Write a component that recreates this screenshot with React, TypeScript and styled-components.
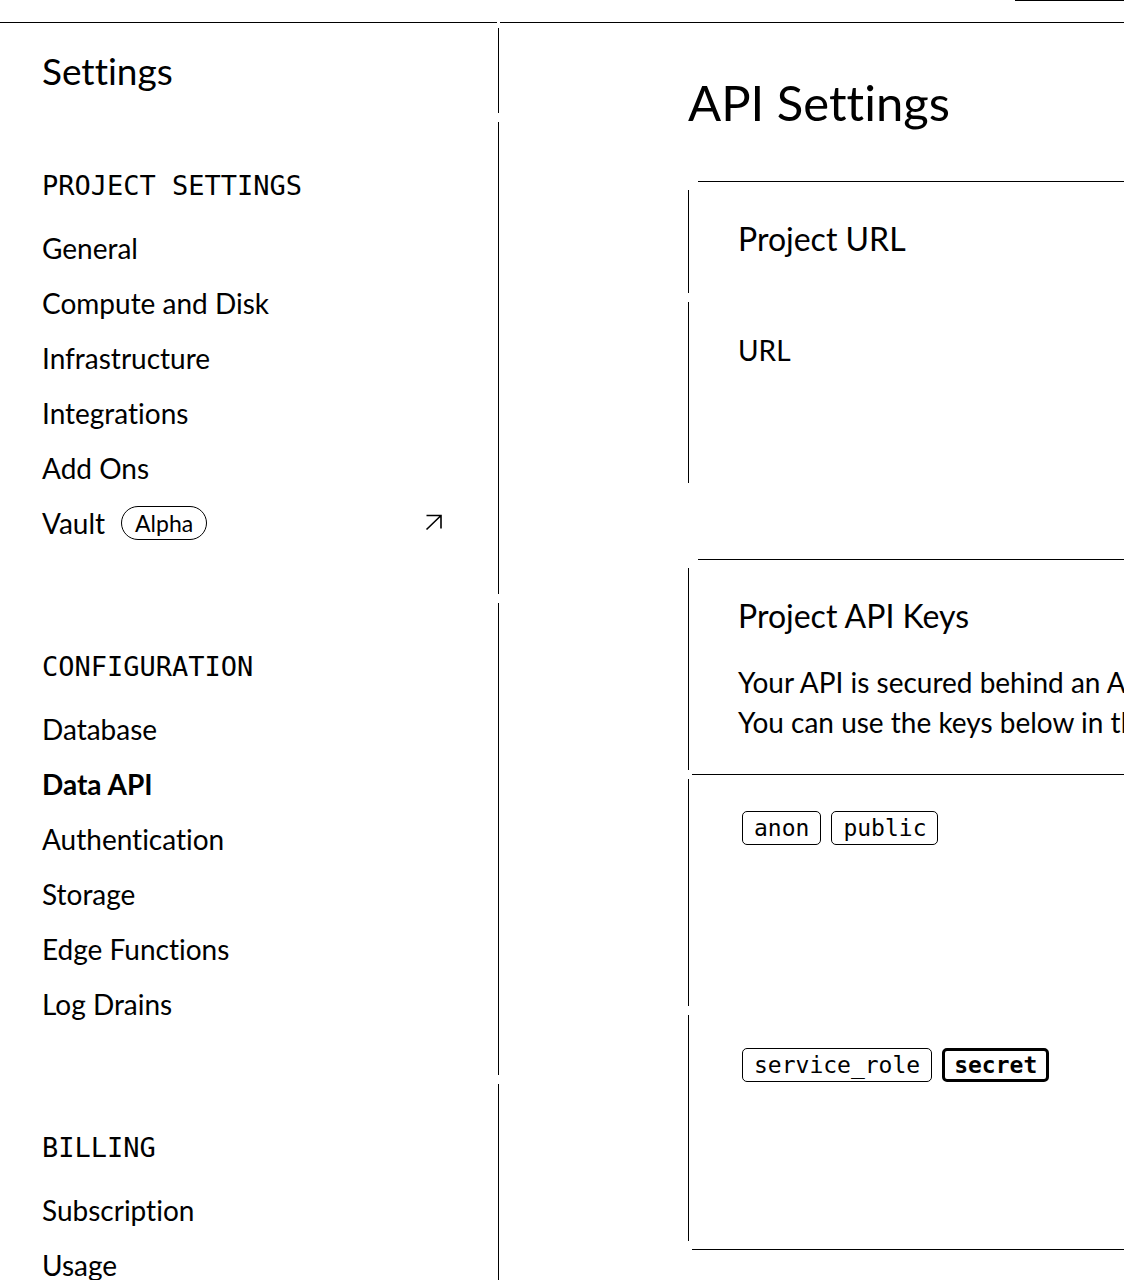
import styled, { createGlobalStyle } from 'styled-components';

const GlobalStyle = createGlobalStyle`
  html, body {
    margin: 0;
    padding: 0;
    background: #fff;
    color: #000;
    font-family: Lato, "Liberation Sans", sans-serif;
    font-variant-ligatures: none;
  }
  * {
    box-sizing: border-box;
  }
`;

const SANS = `Lato, "Liberation Sans", sans-serif`;
const MONO = `"DejaVu Sans Mono", "Liberation Mono", monospace`;

interface NavItem {
  label: string;
  active?: boolean;
  badge?: string;
  external?: boolean;
}

interface NavGroup {
  title: string;
  items: NavItem[];
}

const groups: NavGroup[] = [
  {
    title: 'PROJECT SETTINGS',
    items: [
      { label: 'General' },
      { label: 'Compute and Disk' },
      { label: 'Infrastructure' },
      { label: 'Integrations' },
      { label: 'Add Ons' },
      { label: 'Vault', badge: 'Alpha', external: true },
    ],
  },
  {
    title: 'CONFIGURATION',
    items: [
      { label: 'Database' },
      { label: 'Data API', active: true },
      { label: 'Authentication' },
      { label: 'Storage' },
      { label: 'Edge Functions' },
      { label: 'Log Drains' },
    ],
  },
  {
    title: 'BILLING',
    items: [{ label: 'Subscription' }, { label: 'Usage' }],
  },
];

const ExternalIcon = () => (
  <svg width="17" height="17" viewBox="0 0 17 17" fill="none">
    <path
      d="M1.5 1.5H16V14.5M1.5 15.5L16 1.5"
      stroke="#000"
      strokeWidth="1.6"
    />
  </svg>
);

const App = () => {
  return (
    <Page>
      <GlobalStyle />
      <TopBar>
        <TopBarLeft />
        <TopBarRight>
          <TopAction />
        </TopBarRight>
      </TopBar>

      <Layout>
        <Sidebar>
          <SidebarHead>
            <SidebarHeading>Settings</SidebarHeading>
          </SidebarHead>

          {groups.map((group, i) => (
            <SidebarGroup key={group.title} $grow={i === groups.length - 1}>
              <GroupTitle>{group.title}</GroupTitle>
              {group.items.map((item) => (
                <NavLink key={item.label} $active={item.active}>
                  <span>{item.label}</span>
                  {item.badge && <Badge>{item.badge}</Badge>}
                  {item.external && (
                    <IconSlot>
                      <ExternalIcon />
                    </IconSlot>
                  )}
                </NavLink>
              ))}
            </SidebarGroup>
          ))}
        </Sidebar>

        <Main>
          <PageTitle>API Settings</PageTitle>

          <Card $spaceAfter={72}>
            <CardEdge />
            <Section $height={103} $padTop={30}>
              <SectionTitle>Project URL</SectionTitle>
            </Section>
            <Divider />
            <Section $height={181} $padTop={28}>
              <FieldLabel>URL</FieldLabel>
            </Section>
          </Card>

          <Card>
            <CardEdge />
            <Section $height={202}>
              <SectionTitle>Project API Keys</SectionTitle>
              <Description>
                <p>
                  Your API is secured behind an API gateway which requires an
                  API Key for every request.
                </p>
                <p>
                  You can use the keys below in the Supabase client libraries.
                </p>
              </Description>
            </Section>
            <Divider $visible />
            <Section $height={227} $padTop={32}>
              <PillRow>
                <Pill>anon</Pill>
                <Pill>public</Pill>
              </PillRow>
            </Section>
            <Divider />
            <Section $height={226} $padTop={33}>
              <PillRow>
                <Pill>service_role</Pill>
                <Pill $strong>secret</Pill>
              </PillRow>
            </Section>
            <CardEdge $bottom />
          </Card>
        </Main>
      </Layout>
    </Page>
  );
};

export default App;

const Page = styled.div`
  width: 1124px;
  height: 1280px;
  overflow: hidden;
  display: flex;
  flex-direction: column;
`;

const TopBar = styled.header`
  display: flex;
  gap: 3px;
  height: 23px;
  flex-shrink: 0;
`;

const TopBarLeft = styled.div`
  width: 497px;
  border-bottom: 1px solid #000;
`;

const TopBarRight = styled.div`
  flex: 1;
  display: flex;
  justify-content: flex-end;
  align-items: flex-start;
  border-bottom: 1px solid #000;
`;

const TopAction = styled.div`
  width: 109px;
  border-top: 1px solid #000;
`;

const Layout = styled.div`
  flex: 1;
  display: grid;
  grid-template-columns: 499px 1fr;
  min-height: 0;
`;

const Sidebar = styled.aside`
  display: flex;
  flex-direction: column;
  gap: 9px;
  padding-top: 5px;
`;

const SidebarHead = styled.div`
  height: 85px;
  display: flex;
  align-items: center;
  padding: 0 0 0 42px;
  border-right: 1px solid #000;
`;

const SidebarHeading = styled.h1`
  margin: 0;
  font-family: ${SANS};
  font-size: 37px;
  font-weight: 400;
  line-height: 40px;
`;

const SidebarGroup = styled.nav<{ $grow?: boolean }>`
  display: flex;
  flex-direction: column;
  padding: 44px 56px 44px 42px;
  border-right: 1px solid #000;
  flex: ${(p) => (p.$grow ? 1 : '0 0 auto')};
`;

const GroupTitle = styled.h2`
  margin: 0 0 14px;
  height: 40px;
  line-height: 40px;
  font-family: ${MONO};
  font-size: 27px;
  font-weight: 400;
  letter-spacing: 0;
`;

const NavLink = styled.a<{ $active?: boolean }>`
  display: flex;
  align-items: center;
  height: 55px;
  font-family: ${SANS};
  font-size: 28px;
  font-weight: ${(p) => (p.$active ? 700 : 400)};
  color: #000;
  white-space: nowrap;
`;

const Badge = styled.span`
  margin-left: 16px;
  height: 34px;
  padding: 0 13px;
  display: inline-flex;
  align-items: center;
  border: 1px solid #000;
  border-radius: 17px;
  font-size: 23px;
`;

const IconSlot = styled.span`
  margin-left: auto;
  display: flex;
  align-items: center;
`;

const Main = styled.main`
  padding: 49px 0 0 189px;
  overflow: hidden;
`;

const PageTitle = styled.h1`
  margin: 0 0 49px;
  height: 60px;
  line-height: 60px;
  font-family: ${SANS};
  font-size: 49px;
  font-weight: 400;
  white-space: nowrap;
`;

const Card = styled.section<{ $spaceAfter?: number }>`
  width: 760px;
  display: flex;
  flex-direction: column;
  margin-bottom: ${(p) => p.$spaceAfter ?? 0}px;
`;

const CardEdge = styled.div<{ $bottom?: boolean }>`
  height: 1px;
  background: #000;
  margin: ${(p) => (p.$bottom ? '4px 0 0 4px' : '0 0 4px 10px')};
`;

const Section = styled.div<{ $height: number; $padTop?: number }>`
  height: ${(p) => p.$height}px;
  margin: 4px 0;
  padding: ${(p) => p.$padTop ?? 29}px 0 0 49px;
  border-left: 1px solid #000;
  white-space: nowrap;
`;

const Divider = styled.div<{ $visible?: boolean }>`
  height: 1px;
  margin-left: 4px;
  background: ${(p) => (p.$visible ? '#000' : 'transparent')};
`;

const SectionTitle = styled.h2`
  margin: 0;
  height: 38px;
  line-height: 38px;
  font-family: ${SANS};
  font-size: 32px;
  font-weight: 400;
`;

const Description = styled.div`
  margin-top: 27px;
  font-family: ${SANS};
  font-size: 28px;
  line-height: 40px;

  p {
    margin: 0;
  }
`;

const FieldLabel = styled.label`
  display: block;
  height: 40px;
  line-height: 40px;
  font-family: ${SANS};
  font-size: 28px;
`;

const PillRow = styled.div`
  display: flex;
  gap: 10px;
  margin-left: 4px;
`;

const Pill = styled.span<{ $strong?: boolean }>`
  height: 34px;
  display: inline-flex;
  align-items: center;
  padding: 0 ${(p) => (p.$strong ? 9 : 11)}px;
  border: ${(p) => (p.$strong ? 3 : 1)}px solid #000;
  border-radius: 5px;
  font-family: ${MONO};
  font-size: 23px;
  font-weight: ${(p) => (p.$strong ? 700 : 400)};
`;
